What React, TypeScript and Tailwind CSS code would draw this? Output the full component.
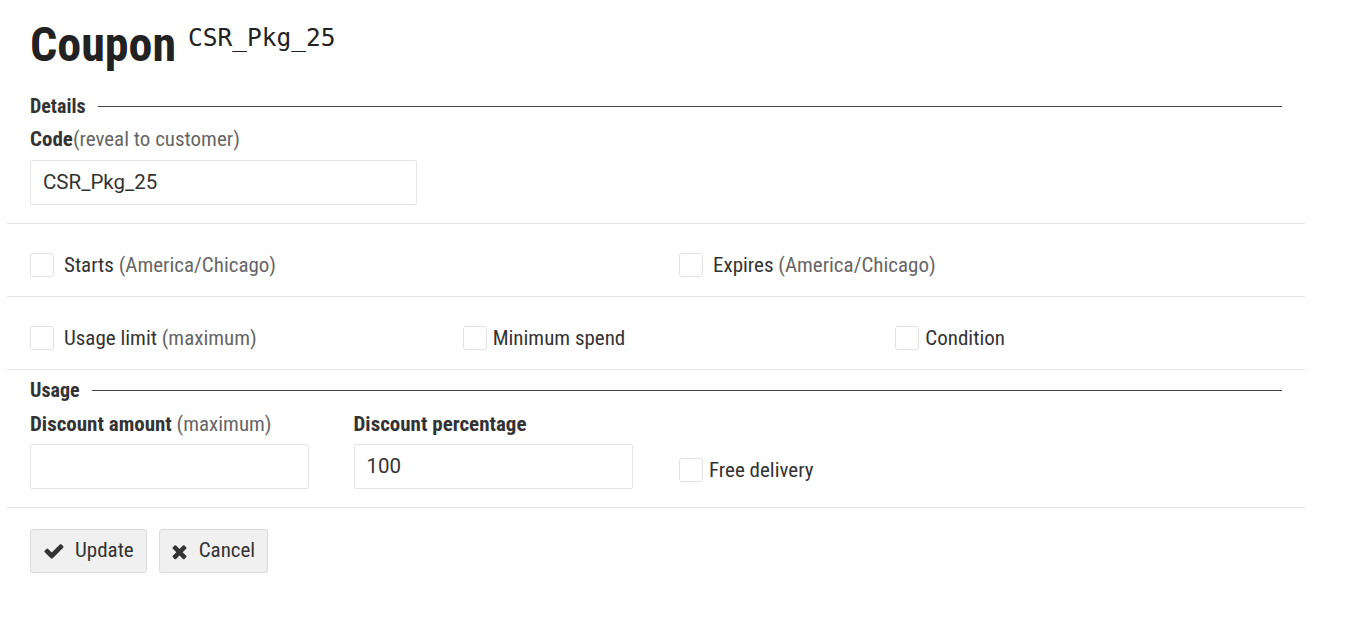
const cond = "font-['Roboto',sans-serif] [font-stretch:75%]";

function Box() {
    return <span className="inline-block w-[24px] h-[24px] shrink-0 rounded-[3px] border border-[#e2e2e2] bg-white" />;
}

function Check({ label, note, gap = "gap-[10px]" }: { label: string; note?: string; gap?: string }) {
    return (
        <label className={`flex items-center ${gap} text-[21px] leading-[24px] text-[#333]`}>
            <Box />
            <span>
                {label}
                {note && <span className="text-[#666]"> {note}</span>}
            </span>
        </label>
    );
}

function SectionTitle({ title }: { title: string }) {
    return (
        <div className="flex items-center gap-[12px] px-[23px]">
            <span className="text-[20px] font-bold text-[#333] leading-[24px]">{title}</span>
            <span className="flex-1 h-px bg-[#444]" />
        </div>
    );
}

export default function App() {
    return (
        <div className={`${cond} w-[1358px] h-[637px] bg-white text-[#333]`}>
            <div className="pl-[30px] pt-[16px] flex items-start gap-[12px]">
                <h1 className="text-[48px] leading-[58px] font-bold text-[#222]">Coupon</h1>
                <span className="font-['DejaVu_Sans_Mono',monospace] [font-stretch:100%] text-[24.5px] leading-[30px] mt-[7px] text-[#222]">
                    CSR_Pkg_25
                </span>
            </div>

            <div className="ml-[7px] w-[1298px]">
                {/* Details */}
                <div className="mt-[20px]">
                    <SectionTitle title="Details" />
                </div>
                <div className="px-[23px] mt-[9px]">
                    <div className="text-[21px] leading-[24px]">
                        <span className="font-bold text-[#333]">Code</span>
                        <span className="text-[#666]">(reveal to customer)</span>
                    </div>
                    <div className="mt-[9px] w-[387px] h-[45px] border border-[#e5e5e5] rounded-[2px] flex items-center px-[12px] font-['Roboto',sans-serif] [font-stretch:100%] text-[20.5px] text-[#333]">
                        CSR_Pkg_25
                    </div>
                </div>

                <div className="mt-[18px] h-px bg-[#e5e5e5]" />
                <div className="grid grid-cols-2 items-start gap-[46px] px-[23px] h-[72px] pt-[29px]">
                    <Check label="Starts" note="(America/Chicago)" />
                    <Check label="Expires" note="(America/Chicago)" />
                </div>

                <div className="h-px bg-[#e5e5e5]" />
                <div className="grid grid-cols-3 items-start gap-[46px] px-[23px] h-[72px] pt-[29px]">
                    <Check label="Usage limit" note="(maximum)" />
                    <Check label="Minimum spend" gap="gap-[6px]" />
                    <Check label="Condition" gap="gap-[6px]" />
                </div>

                <div className="h-px bg-[#e5e5e5]" />
                {/* Usage */}
                <div className="mt-[8px]">
                    <SectionTitle title="Usage" />
                </div>
                <div className="grid grid-cols-4 gap-[46px] px-[23px] mt-[10px]">
                    <div>
                        <div className="text-[21px] leading-[24px]">
                            <span className="font-bold">Discount amount</span>
                            <span className="text-[#666]"> (maximum)</span>
                        </div>
                        <div className="mt-[8px] h-[45px] border border-[#e5e5e5] rounded-[2px]" />
                    </div>
                    <div className="-ml-px">
                        <div className="text-[21px] leading-[24px] font-bold">Discount percentage</div>
                        <div className="mt-[8px] h-[45px] border border-[#e5e5e5] rounded-[2px] flex items-center px-[12px] font-['Roboto',sans-serif] [font-stretch:100%] text-[20.5px] text-[#333]">
                            100
                        </div>
                    </div>
                    <div className="flex items-end pb-[7px]">
                        <Check label="Free delivery" gap="gap-[6px]" />
                    </div>
                    <div />
                </div>

                <div className="mt-[18px] h-px bg-[#e5e5e5]" />
                <div className="flex gap-[12px] px-[23px] mt-[21px]">
                    <button className="flex items-center gap-[10px] h-[44px] pl-[12px] pr-[12px] bg-[#f0f0f0] border border-[#dcdcdc] rounded-[3px] text-[21px] text-[#333]">
                        <svg viewBox="0 0 1792 1792" className="w-[22px] h-[22px]" fill="currentColor">
                            <path d="M1671 566q0 40-28 68l-724 724-136 136q-28 28-68 28t-68-28l-136-136-362-362q-28-28-28-68t28-68l136-136q28-28 68-28t68 28l294 295 656-657q28-28 68-28t68 28l136 136q28 28 28 68z" />
                        </svg>
                        Update
                    </button>
                    <button className="flex items-center gap-[11px] h-[44px] pl-[11px] pr-[12px] bg-[#f0f0f0] border border-[#dcdcdc] rounded-[3px] text-[21px] text-[#333]">
                        <svg viewBox="0 0 1408 1792" className="w-[17px] h-[21px]" fill="currentColor">
                            <path d="M1298 1322q0 40-28 68l-136 136q-28 28-68 28t-68-28l-294-294-294 294q-28 28-68 28t-68-28l-136-136q-28-28-28-68t28-68l294-294-294-294q-28-28-28-68t28-68l136-136q28-28 68-28t68 28l294 294 294-294q28-28 68-28t68 28l136 136q28 28 28 68t-28 68l-294 294 294 294q28 28 28 68z" />
                        </svg>
                        Cancel
                    </button>
                </div>
            </div>
        </div>
    );
}
